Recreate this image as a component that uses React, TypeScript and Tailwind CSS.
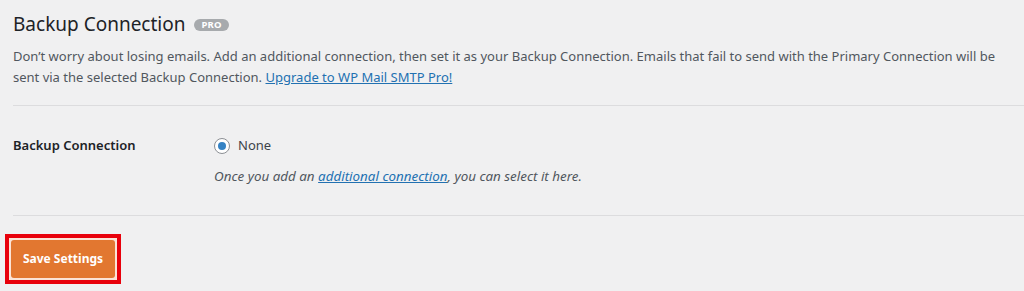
export default function App() {
  return (
    <div
      className="h-[291px] w-[1024px] overflow-hidden bg-[#f0f0f1] text-[#50575e]"
      style={{ fontFamily: '"Noto Sans", "Open Sans", sans-serif' }}
    >
      <div className="pl-[13px] pt-[9px]">
        {/* Heading */}
        <div className="flex items-center gap-[9px]">
          <h2 className="text-[19px] font-normal leading-[30px] text-[#1d2327]">Backup Connection</h2>
          <span className="mt-[1px] rounded-full bg-[#a7aaad] px-[7px] text-[9.5px] font-bold leading-[12px] tracking-[0.2px] text-white">
            PRO
          </span>
        </div>
        <p className="mt-[7px] pr-[8px] text-[13px] leading-[21px]">
          Don’t worry about losing emails. Add an additional connection, then set it as your Backup Connection. Emails
          that fail to send with the Primary Connection will be sent via the selected Backup Connection.{' '}
          <a href="#" className="text-[#2271b1] underline">
            Upgrade to WP Mail SMTP Pro!
          </a>
        </p>
        <div className="mt-[17px] border-t border-[#dcdcde]" />

        {/* Setting row */}
        <div className="flex pt-[29px] pb-[29px]">
          <div className="w-[201px] text-[13px] font-semibold leading-[21px] text-[#1d2327]">Backup Connection</div>
          <div>
            <label className="flex items-center gap-[8px] text-[13px] leading-[21px] text-[#3c434a]">
              <span className="flex h-[16px] w-[16px] items-center justify-center rounded-full border border-[#8c8f94] bg-white">
                <span className="h-[8px] w-[8px] rounded-full bg-[#3582c4]" />
              </span>
              None
            </label>
            <p className="mt-[10px] text-[13.4px] italic leading-[20px]">
              Once you add an{' '}
              <a href="#" className="text-[#2271b1] underline">
                additional connection
              </a>
              , you can select it here.
            </p>
          </div>
        </div>
        <div className="border-t border-[#dcdcde]" />
      </div>

      {/* Save button */}
      <div className="pl-[5px] pt-[18px]">
        <div className="inline-block border-[4px] border-[#e8000b] bg-[#fbe3d6] p-[2px]">
          <button className="flex h-[38px] w-[104px] items-center justify-center rounded-[3px] bg-[#e27730] text-[12px] font-bold text-white">
            Save Settings
          </button>
        </div>
      </div>
    </div>
  )
}
